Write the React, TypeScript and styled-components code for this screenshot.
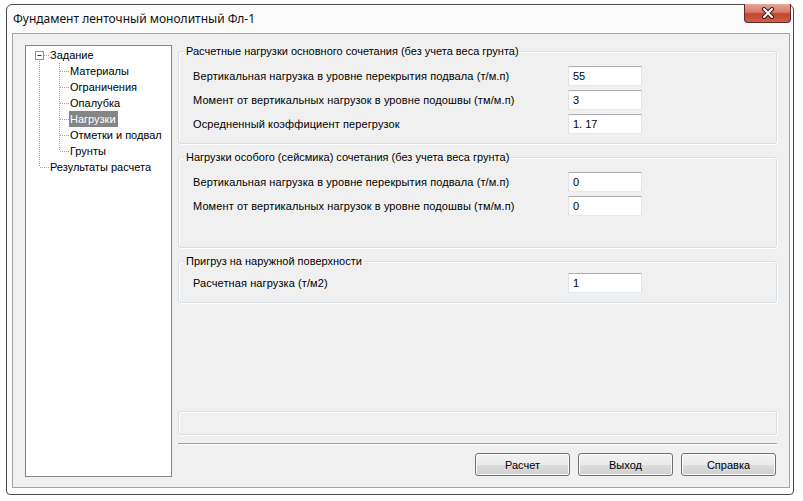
import React from "react";
import styled, { createGlobalStyle } from "styled-components";

const GlobalStyle = createGlobalStyle`
  html, body {
    margin: 0;
    padding: 0;
    background: #ffffff;
  }
  body {
    font-family: "Liberation Sans", Arial, sans-serif;
    font-size: 11px;
    color: #000;
  }
`;

type TreeNode = {
  label: string;
  selected?: boolean;
  children?: TreeNode[];
};

const tree: TreeNode[] = [
  {
    label: "Задание",
    children: [
      { label: "Материалы" },
      { label: "Ограничения" },
      { label: "Опалубка" },
      { label: "Нагрузки", selected: true },
      { label: "Отметки и подвал" },
      { label: "Грунты" },
    ],
  },
  { label: "Результаты расчета" },
];

type Field = { label: string; value: string };

const groups: { title: string; fields: Field[]; tall?: boolean; compact?: boolean }[] = [
  {
    title: "Расчетные нагрузки основного сочетания (без учета веса грунта)",
    fields: [
      { label: "Вертикальная нагрузка в уровне перекрытия подвала (т/м.п)", value: "55" },
      { label: "Момент от вертикальных нагрузок в уровне подошвы (тм/м.п)", value: "3" },
      { label: "Осредненный коэффициент перегрузок", value: "1. 17" },
    ],
  },
  {
    title: "Нагрузки особого (сейсмика) сочетания (без учета веса грунта)",
    tall: true,
    fields: [
      { label: "Вертикальная нагрузка в уровне перекрытия подвала (т/м.п)", value: "0" },
      { label: "Момент от вертикальных нагрузок в уровне подошвы (тм/м.п)", value: "0" },
    ],
  },
  {
    title: "Пригруз на наружной поверхности",
    compact: true,
    fields: [{ label: "Расчетная нагрузка (т/м2)", value: "1" }],
  },
];

const Window = styled.div`
  margin: 4px 0 0 6px;
  width: 788px;
  height: 491px;
  box-sizing: border-box;
  border: 1px solid #4a4a4a;
  border-radius: 6px 6px 4px 4px;
  background: #fbfbfb;
  display: flex;
  flex-direction: column;
`;

const TitleBar = styled.div`
  height: 28px;
  display: flex;
  align-items: flex-start;
  justify-content: space-between;
  padding-left: 6px;
`;

const Title = styled.span`
  font-family: "Noto Sans", "Liberation Sans", sans-serif;
  font-size: 12px;
  line-height: 28px;
  color: #111;
`;

const CloseButton = styled.div`
  margin: -1px 2px 0 0;
  width: 47px;
  height: 19px;
  box-sizing: border-box;
  border: 1px solid #5c2a22;
  border-top: none;
  border-radius: 0 0 4px 4px;
  background: linear-gradient(#e8a89a 0%, #d97a68 45%, #c4442e 55%, #d0604a 100%);
  display: flex;
  align-items: center;
  justify-content: center;
`;

const Client = styled.div`
  flex: 1;
  margin: 0 3px 6px 5px;
  border: 1px solid #a3a3a3;
  background: #f0f0f0;
  display: flex;
  gap: 6px;
  padding: 11px 12px 10px 12px;
`;

const TreePanel = styled.div`
  width: 147px;
  box-sizing: border-box;
  flex-shrink: 0;
  background: #fff;
  border: 1px solid #828790;
  padding: 1px 0 0 3px;
`;

const TreeRow = styled.div`
  display: flex;
  align-items: center;
  height: 16px;
`;

const Label = styled.span<{ $selected?: boolean }>`
  padding: 0 2px 0 1px;
  line-height: 16px;
  white-space: nowrap;
  background: ${(p) => (p.$selected ? "#858585" : "transparent")};
  color: ${(p) => (p.$selected ? "#fff" : "#000")};
`;

const dot = "#a0a0a0";

const Guide: React.FC<{ up?: boolean; down?: boolean; across?: boolean; expander?: boolean }> = ({
  up,
  down,
  across,
  expander,
}) => (
  <svg width="20" height="16" style={{ flexShrink: 0 }}>
    {up && <line x1="10.5" y1="0" x2="10.5" y2="8" stroke={dot} strokeDasharray="1 1" />}
    {down && <line x1="10.5" y1="8" x2="10.5" y2="16" stroke={dot} strokeDasharray="1 1" />}
    {across && <line x1="11" y1="8.5" x2="20" y2="8.5" stroke={dot} strokeDasharray="1 1" />}
    {expander && (
      <>
        <rect x="6.5" y="4.5" width="8" height="8" fill="#fff" stroke="#919191" />
        <line x1="8.5" y1="8.5" x2="12.5" y2="8.5" stroke="#333" />
      </>
    )}
  </svg>
);

const renderTree = (nodes: TreeNode[], rails: boolean[], isRoot: boolean): React.ReactNode[] =>
  nodes.flatMap((node, i) => {
    const last = i === nodes.length - 1;
    const rows: React.ReactNode[] = [
      <TreeRow key={rails.length + node.label}>
        {rails.map((r, k) => (
          <Guide key={k} up={r} down={r} />
        ))}
        <Guide up={!(isRoot && i === 0)} down={!last} across expander={!!node.children} />
        <Label $selected={node.selected}>{node.label}</Label>
      </TreeRow>,
    ];
    if (node.children) rows.push(...renderTree(node.children, [...rails, !last], false));
    return rows;
  });

const Main = styled.div`
  width: 599px;
  display: flex;
  flex-direction: column;
`;

const Group = styled.fieldset<{ $bottom: number; $top: number }>`
  margin: 0 0 7px 0;
  padding: ${(p) => p.$top}px 0 ${(p) => p.$bottom}px 0;
  border: 1px solid #d5dfe5;
  border-radius: 3px;
  box-shadow: inset 1px 1px 0 #fff, 1px 1px 0 #fff;
  min-width: 0;
  display: flex;
  flex-direction: column;
  gap: 4px;
`;

const Legend = styled.legend`
  margin-left: 6px;
  padding: 0 1px;
  line-height: 13px;
`;

const FieldRow = styled.div`
  display: grid;
  grid-template-columns: 375px 74px;
  align-items: center;
  height: 20px;
  padding-left: 14px;
`;

const FieldLabel = styled.span`
  letter-spacing: 0.1px;
`;

const Input = styled.div`
  height: 20px;
  box-sizing: border-box;
  background: #fff;
  border: 1px solid #e2e3ea;
  border-top-color: #abadb3;
  border-bottom-color: #e3e9ef;
  padding: 0 4px;
  line-height: 18px;
`;

const Spacer = styled.div`
  flex: 1;
`;

const StatusBox = styled.div`
  height: 24px;
  box-sizing: border-box;
  border: 1px solid #d5dfe5;
  border-radius: 2px;
  box-shadow: inset 1px 1px 0 #fff, 1px 1px 0 #fff;
`;

const Separator = styled.div`
  margin-top: 8px;
  height: 1px;
  background: #a0a0a0;
  border-bottom: 1px solid #fff;
`;

const ButtonBar = styled.div`
  margin: 8px 1px 1px 0;
  display: flex;
  justify-content: flex-end;
  gap: 8px;
`;

const Button = styled.div`
  width: 95px;
  height: 23px;
  box-sizing: border-box;
  border: 1px solid #707070;
  border-radius: 3px;
  background: linear-gradient(#f2f2f2 0%, #ebebeb 50%, #dddddd 51%, #cfcfcf 100%);
  box-shadow: inset 0 0 0 1px #fcfcfc;
  display: flex;
  align-items: center;
  justify-content: center;
`;

const App: React.FC = () => {
  return (
    <>
      <GlobalStyle />
      <Window>
        <TitleBar>
          <Title>Фундамент ленточный монолитный Фл-1</Title>
          <CloseButton>
            <svg width="14" height="12" viewBox="0 0 14 12">
              <path d="M3 2 L11 10 M11 2 L3 10" stroke="#3b1b15" strokeWidth="4" strokeLinecap="round" />
              <path d="M3 2 L11 10 M11 2 L3 10" stroke="#fff" strokeWidth="2" strokeLinecap="round" />
            </svg>
          </CloseButton>
        </TitleBar>
        <Client>
          <TreePanel>{renderTree(tree, [], true)}</TreePanel>
          <Main>
            {groups.map((g) => (
              <Group key={g.title} $top={g.compact ? 5 : 8} $bottom={g.tall ? 31 : 9}>
                <Legend>{g.title}</Legend>
                {g.fields.map((f) => (
                  <FieldRow key={f.label}>
                    <FieldLabel>{f.label}</FieldLabel>
                    <Input>{f.value}</Input>
                  </FieldRow>
                ))}
              </Group>
            ))}
            <Spacer />
            <StatusBox />
            <Separator />
            <ButtonBar>
              <Button>Расчет</Button>
              <Button>Выход</Button>
              <Button>Справка</Button>
            </ButtonBar>
          </Main>
        </Client>
      </Window>
    </>
  );
};

export default App;
